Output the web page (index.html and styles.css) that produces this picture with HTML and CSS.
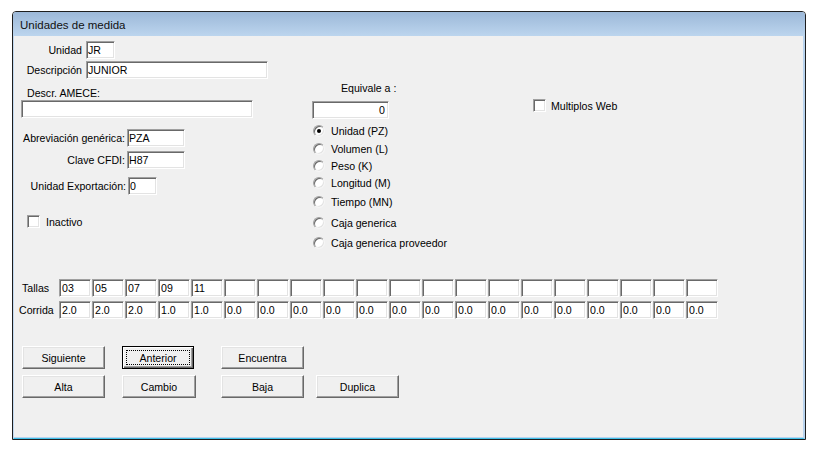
FILE: index.html
```html
<!DOCTYPE html>
<html lang="es">
<head>
    <meta charset="UTF-8">
    <meta name="viewport" content="width=device-width, initial-scale=1.0">
    <title>Unidades de medida</title>
    <link rel="stylesheet" href="styles.css">
</head>
<body>
    <div class="window">
        <div class="titlebar">Unidades de medida</div>
        <div class="client">
            <div class="top">
                <div class="col-left">
                    <div class="row row-unidad">
                        <label class="lbl lbl-short">Unidad</label>
                        <input class="field w-29" type="text" value="JR">
                    </div>
                    <div class="row row-desc">
                        <label class="lbl lbl-short">Descripción</label>
                        <input class="field w-182" type="text" value="JUNIOR">
                    </div>
                    <div class="lbl-amece">Descr. AMECE:</div>
                    <input class="field w-232 amece" type="text" value="">
                    <div class="row row-abrev">
                        <label class="lbl lbl-long">Abreviación genérica:</label>
                        <input class="field w-58" type="text" value="PZA">
                    </div>
                    <div class="row row-clave">
                        <label class="lbl lbl-long">Clave CFDI:</label>
                        <input class="field w-58" type="text" value="H87">
                    </div>
                    <div class="row row-export">
                        <label class="lbl lbl-export">Unidad Exportación:</label>
                        <input class="field w-29" type="text" value="0">
                    </div>
                    <div class="check row-inactivo">
                        <span class="box"></span>
                        <span>Inactivo</span>
                    </div>
                </div>

                <div class="col-mid">
                    <div class="lbl-equiv">Equivale a :</div>
                    <input class="field w-77 num" type="text" value="0">
                    <div class="radios">
                        <div class="radio-row"><span class="radio on"></span>Unidad (PZ)</div>
                        <div class="radio-row"><span class="radio"></span>Volumen (L)</div>
                        <div class="radio-row"><span class="radio"></span>Peso (K)</div>
                        <div class="radio-row"><span class="radio"></span>Longitud (M)</div>
                        <div class="radio-row"><span class="radio"></span>Tiempo (MN)</div>
                        <div class="radio-row"><span class="radio"></span>Caja generica</div>
                        <div class="radio-row"><span class="radio"></span>Caja generica proveedor</div>
                    </div>
                </div>

                <div class="col-right">
                    <div class="check">
                        <span class="box"></span>
                        <span>Multiplos Web</span>
                    </div>
                </div>
            </div>

            <div class="sizes">
                <div class="size-row">
                    <span class="size-lbl tallas">Tallas</span>
                    <div class="cells" id="tallas"></div>
                </div>
                <div class="size-row">
                    <span class="size-lbl corrida">Corrida</span>
                    <div class="cells" id="corrida"></div>
                </div>
            </div>

            <div class="buttons">
                <div class="btn-row">
                    <button class="btn b-sig">Siguiente</button>
                    <button class="btn b-ant default"><span class="focus">Anterior</span></button>
                    <button class="btn b-enc">Encuentra</button>
                </div>
                <div class="btn-row">
                    <button class="btn b-alta">Alta</button>
                    <button class="btn b-cambio">Cambio</button>
                    <button class="btn b-baja">Baja</button>
                    <button class="btn b-dup">Duplica</button>
                </div>
            </div>
        </div>
    </div>
    <script>
        const tallas = ["03", "05", "07", "09", "11"];
        const corrida = ["2.0", "2.0", "2.0", "1.0", "1.0"];

        function fill(id, values, blank) {
            let html = "";
            for (let i = 0; i < 20; i++) {
                const v = i < values.length ? values[i] : blank;
                html += `<input class="field cell" type="text" value="${v}">`;
            }
            document.getElementById(id).innerHTML = html;
        }
        fill("tallas", tallas, "");
        fill("corrida", corrida, "0.0");
    </script>
</body>
</html>
```

FILE: styles.css
```css
body {
    margin: 0;
    background: #fff;
    font-family: "Liberation Sans", Arial, sans-serif;
    font-size: 10.6px;
    color: #000;
}

.window {
    box-sizing: border-box;
    width: 794px;
    height: 429px;
    margin: 11px 0 0 12px;
    border: 1px solid #1e1e1e;
    border-radius: 4px 4px 0 0;
    display: flex;
    flex-direction: column;
    overflow: hidden;
}

.titlebar {
    height: 24px;
    box-sizing: border-box;
    padding: 3px 0 0 7px;
    line-height: 21px;
    font-size: 11.5px;
    color: #111;
    background: linear-gradient(#9cb8d8, #bcd5ee);
}

.client {
    flex: 1;
    background: #f0f0f0;
    border-left: 1px solid #c2d9f0;
    border-right: 2px solid #b8d3ee;
    border-bottom: 1px solid #3fc1e9;
    box-shadow: inset 0 -1px #b8d3ee;
}

.field {
    box-sizing: border-box;
    height: 18px;
    margin: 0;
    padding: 0 0 0 1px;
    font-family: inherit;
    font-size: 10.6px;
    color: #000;
    background: #fff;
    border: 1px solid;
    border-color: #a0a0a0 #fff #fff #a0a0a0;
    box-shadow: inset 1px 1px #696969, inset -1px -1px #e3e3e3;
    outline: none;
}
.w-29 { width: 29px; }
.w-58 { width: 58px; }
.w-77 { width: 77px; }
.w-182 { width: 182px; }
.w-232 { width: 232px; }
.num { text-align: right; padding-right: 3px; }

/* ---- top area ---- */
.top {
    display: flex;
    height: 215px;
}
.col-left {
    width: 298px;
    display: flex;
    flex-direction: column;
    align-items: flex-start;
}
.col-mid {
    width: 221px;
    display: flex;
    flex-direction: column;
    align-items: flex-start;
}
.col-right {
    padding-top: 63px;
}

.row {
    display: flex;
    align-items: center;
}
.row-unidad { margin-top: 5px; }
.row-desc { margin-top: 2px; }
.row-abrev { margin-top: 11px; }
.row-clave { margin-top: 4px; }
.row-export { margin-top: 8px; }

.lbl {
    box-sizing: border-box;
    text-align: right;
    white-space: nowrap;
}
.lbl-short { width: 72px; padding-right: 4px; }
.lbl-long { width: 113px; padding-right: 2px; }
.lbl-export { width: 114px; padding-right: 2px; }

.lbl-amece {
    margin: 8px 0 0 13px;
    line-height: 13px;
}
.col-left .amece { margin-left: 7px; }

.check {
    display: flex;
    align-items: center;
    height: 13px;
}
.row-inactivo {
    margin: 20px 0 0 13px;
}
.box {
    box-sizing: border-box;
    width: 13px;
    height: 13px;
    margin-right: 6px;
    background: #fff;
    border: 1px solid;
    border-color: #a0a0a0 #fff #fff #a0a0a0;
    box-shadow: inset 1px 1px #696969, inset -1px -1px #e3e3e3;
}
.col-right .box { margin-right: 5px; }

.lbl-equiv {
    margin: 46px 0 0 29px;
    line-height: 13px;
}
.col-mid .field { margin-top: 6px; }

.radios {
    margin-top: 3px;
    display: flex;
    flex-direction: column;
}
.radio-row {
    display: flex;
    align-items: center;
    height: 17px;
    padding-left: 1px;
}
.radio-row:nth-child(2) { margin-top: 1px; }
.radio-row:nth-child(5) { margin-top: 2px; }
.radio-row:nth-child(6) { margin-top: 4px; }
.radio-row:nth-child(7) { margin-top: 3px; }

.radio {
    position: relative;
    box-sizing: border-box;
    width: 12px;
    height: 12px;
    margin-right: 6px;
    border-radius: 50%;
    background: #fff;
    border: 1px solid;
    border-color: #a0a0a0 #f4f4f4 #f4f4f4 #a0a0a0;
    box-shadow: inset 1px 1px #696969, inset -1px -1px #e3e3e3;
}
.radio.on::after {
    content: "";
    position: absolute;
    left: 3px;
    top: 3px;
    width: 4px;
    height: 4px;
    border-radius: 50%;
    background: #000;
}

/* ---- tallas / corrida ---- */
.sizes {
    margin-top: 28px;
    display: flex;
    flex-direction: column;
    gap: 4px;
}
.size-row {
    display: flex;
    align-items: center;
}
.size-lbl {
    box-sizing: border-box;
    width: 45px;
}
.tallas { padding-left: 8px; }
.corrida { padding-left: 5px; }
.cells {
    display: flex;
    gap: 1px;
}
.cells .cell {
    width: 32px;
    padding-left: 2px;
}

/* ---- buttons ---- */
.buttons {
    margin-top: 27px;
    display: flex;
    flex-direction: column;
    gap: 6px;
}
.btn-row {
    display: flex;
}
.btn {
    box-sizing: border-box;
    height: 23px;
    width: 83px;
    margin: 0;
    padding: 0;
    font-family: inherit;
    font-size: 10.6px;
    color: #000;
    background: #f0f0f0;
    border: 1px solid;
    border-color: #fff #696969 #696969 #fff;
    box-shadow: inset -1px -1px #a0a0a0, inset 1px 1px #e3e3e3;
}
.b-sig, .b-alta { margin-left: 8px; }
.b-ant { margin-left: 17px; width: 72px; }
.b-enc { margin-left: 27px; }
.b-cambio { margin-left: 17px; width: 74px; }
.b-baja { margin-left: 25px; }
.b-dup { margin-left: 12px; }

.btn.default {
    border: 1px solid #000;
    box-shadow: inset 1px 1px #fff, inset -1px -1px #696969, inset -2px -2px #a0a0a0;
    display: flex;
    padding: 3px;
}
.focus {
    flex: 1;
    display: flex;
    align-items: center;
    justify-content: center;
    border: 1px dotted #000;
}
```
